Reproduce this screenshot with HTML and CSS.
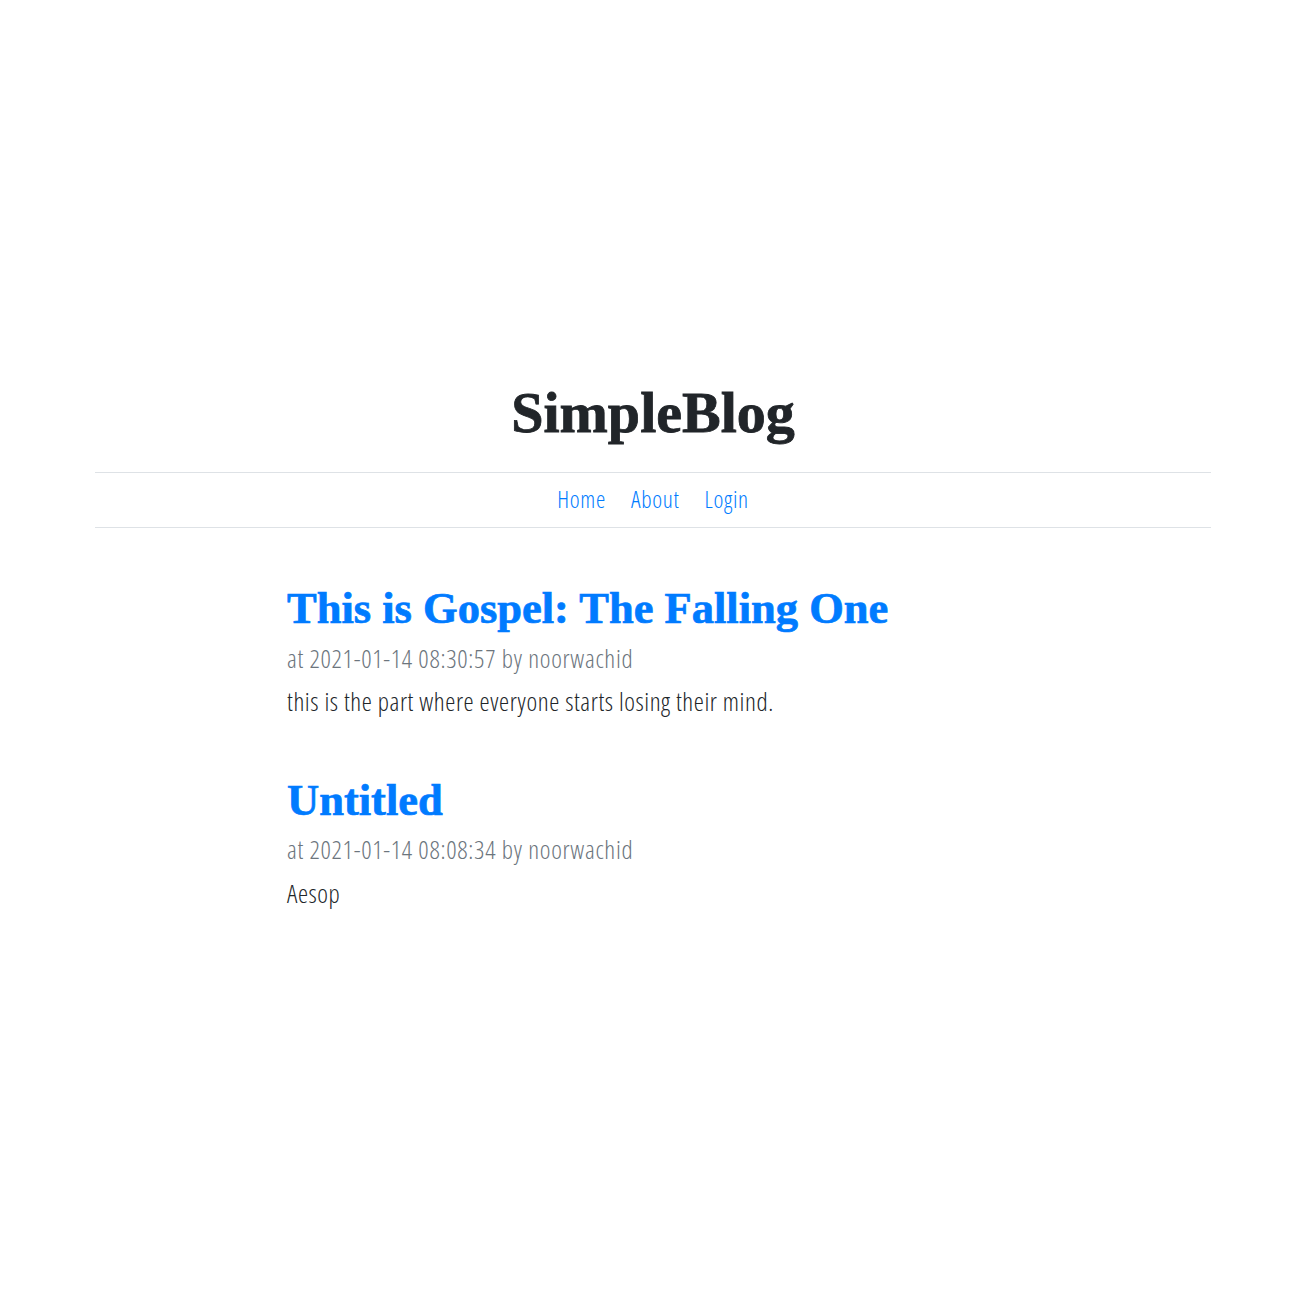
FILE: index.html
```html
<!DOCTYPE html>
<html lang="en">
<head>
<meta charset="utf-8">
<title>SimpleBlog</title>
<link rel="stylesheet" href="styles.css">
</head>
<body>
<div class="container">
  <header class="site-header">
    <h1 class="brand">SimpleBlog</h1>
  </header>
  <nav class="site-nav">
    <a href="#" class="nav-link">Home</a>
    <a href="#" class="nav-link">About</a>
    <a href="#" class="nav-link">Login</a>
  </nav>
  <main class="posts">
    <article class="post">
      <h2 class="post-title"><a href="#">This is Gospel: The Falling One</a></h2>
      <p class="post-meta">at 2021-01-14 08:30:57 by noorwachid</p>
      <p class="post-body">this is the part where everyone starts losing their mind.</p>
    </article>
    <article class="post">
      <h2 class="post-title"><a href="#">Untitled</a></h2>
      <p class="post-meta">at 2021-01-14 08:08:34 by noorwachid</p>
      <p class="post-body">Aesop</p>
    </article>
  </main>
</div>
</body>
</html>
```

FILE: styles.css
```css
html, body {
  margin: 0;
  padding: 0;
  background: #ffffff;
}

body {
  font-family: "Open Sans", "DejaVu Sans", sans-serif;
  font-stretch: 75%;
  font-weight: 300;
  color: #212529;
}

.container {
  width: 1116px;
  margin-left: 95px;
}

.site-header {
  padding-top: 378px;
  padding-bottom: 24px;
  text-align: center;
}

.brand {
  margin: 0;
  font-family: "Liberation Serif", "DejaVu Serif", serif;
  font-stretch: normal;
  font-weight: 900;
  font-size: 58px;
  line-height: 70px;
  color: #212529;
  -webkit-text-stroke: 0.8px #212529;
}

.site-nav {
  display: flex;
  justify-content: center;
  align-items: center;
  gap: 25px;
  height: 54px;
  border-top: 1px solid #dee2e6;
  border-bottom: 1px solid #dee2e6;
}

.nav-link {
  font-size: 23.5px;
  letter-spacing: 0.7px;
  color: #007bff;
  text-decoration: none;
  line-height: 1;
}

.posts {
  padding-left: 192px;
  padding-top: 54px;
}

.post {
  margin-bottom: 53.5px;
}

.post-title {
  margin: 0 0 4.3px 0;
  font-family: "Liberation Serif", "DejaVu Serif", serif;
  font-stretch: normal;
  font-weight: 900;
  font-size: 44.5px;
  line-height: 1.2;
}

.post-title a {
  color: #007bff;
  text-decoration: none;
  -webkit-text-stroke: 0.7px #007bff;
}

.post-meta {
  margin: 0 0 7px 0;
  font-size: 25.5px;
  letter-spacing: 0.68px;
  line-height: 36.75px;
  color: #6c757d;
}

.post-body {
  margin: 0;
  font-size: 25.5px;
  letter-spacing: 0.58px;
  line-height: 36.75px;
  color: #212529;
}
```
